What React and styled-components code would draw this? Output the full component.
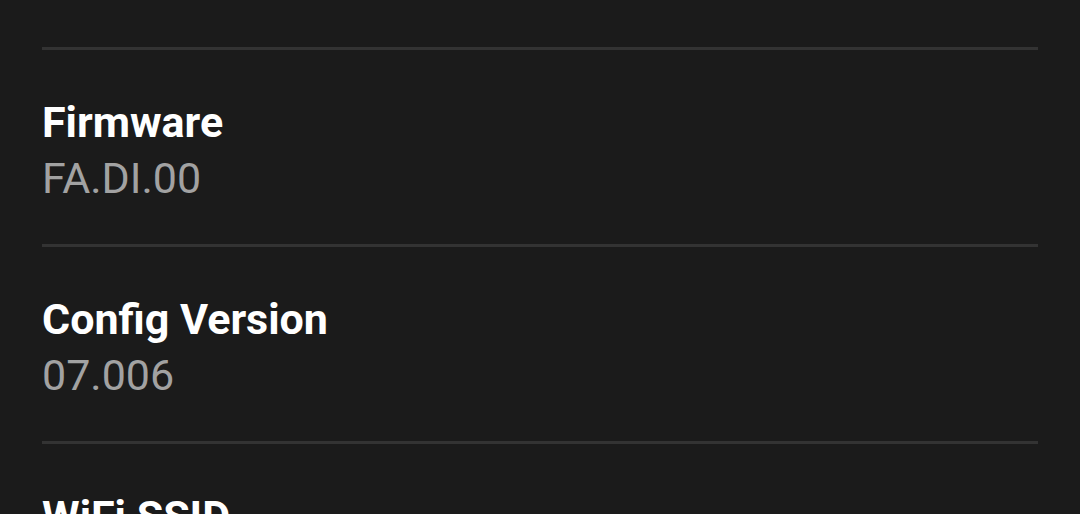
import styled, { createGlobalStyle } from "styled-components";

const GlobalStyle = createGlobalStyle`
  html, body {
    margin: 0;
    padding: 0;
    background: #1b1b1b;
    overflow: hidden;
  }
`;

const Page = styled.div`
  background: #1b1b1b;
  height: 514px;
  overflow: hidden;
  padding: 47px 42px 0;
  box-sizing: border-box;
  font-family: Roboto, "Noto Sans", sans-serif;
`;

const Row = styled.div`
  border-top: 3px solid #333333;
  padding: 47px 0 41px;
`;

const Label = styled.div`
  color: #ffffff;
  font-size: 43px;
  font-weight: 700;
  line-height: 50px;
`;

const Value = styled.div`
  color: #a2a2a2;
  font-size: 43px;
  font-weight: 400;
  line-height: 50px;
  margin-top: 6px;
`;

const items = [
  { label: "Firmware", value: "FA.DI.00" },
  { label: "Config Version", value: "07.006" },
  { label: "WiFi SSID", value: "" },
];

export default function App() {
  return (
    <>
      <GlobalStyle />
      <Page>
        {items.map((item) => (
          <Row key={item.label}>
            <Label>{item.label}</Label>
            <Value>{item.value}</Value>
          </Row>
        ))}
      </Page>
    </>
  );
}
